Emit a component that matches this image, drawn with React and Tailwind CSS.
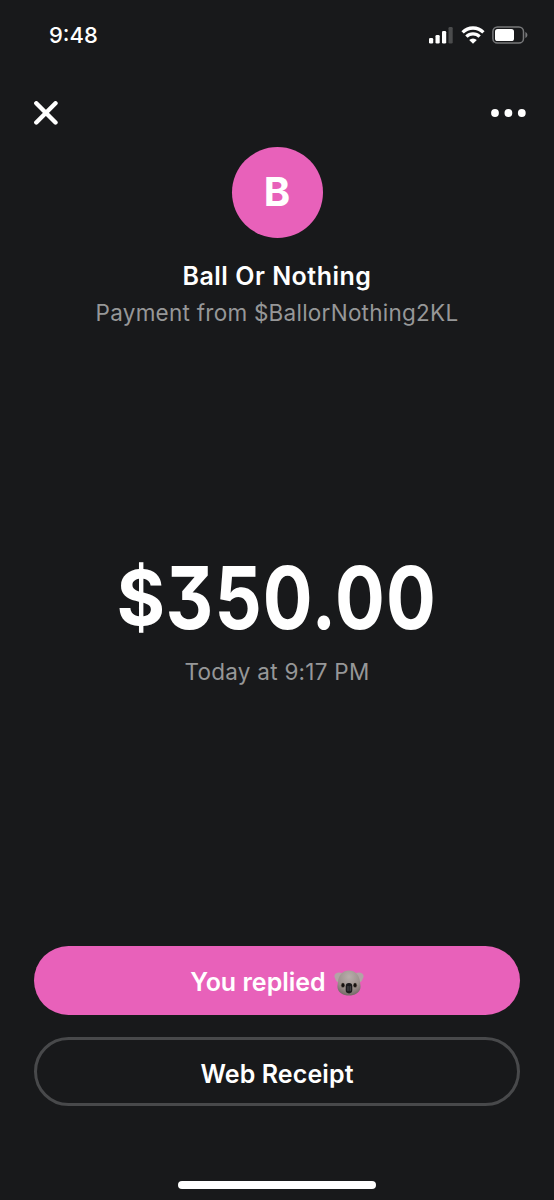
const SignalIcon = () => (
  <svg width="24" height="18" viewBox="0 0 24 18">
    <rect x="0" y="12" width="4.200" height="5.500" rx="1.300" fill="#fff" />
    <rect x="6.500" y="9" width="4.200" height="8.500" rx="1.300" fill="#fff" />
    <rect x="13" y="5" width="4.200" height="12.500" rx="1.300" fill="#fff" />
    <rect x="19.500" y="1" width="4.200" height="16.500" rx="1.300" fill="#4b4c4d" />
  </svg>
)

const WifiIcon = () => (
  <svg width="24" height="18" viewBox="0 0 24 18" fill="none" stroke="#fff" strokeWidth="3.3">
    <path d="M1.600 6.300a14.700 14.700 0 0 1 20.800 0" />
    <path d="M5.400 10.700a9.300 9.300 0 0 1 13.200 0" />
    <path d="M12 17.800l-3.800-3.800a5.400 5.400 0 0 1 7.600 0z" fill="#fff" stroke="none" />
  </svg>
)

const BatteryIcon = () => (
  <svg width="36" height="18" viewBox="0 0 36 18">
    <rect x="0.9" y="0.9" width="30.6" height="16.2" rx="4.6" fill="none" stroke="#77787a" strokeWidth="1.5" />
    <rect x="3" y="3" width="19" height="12" rx="2.6" fill="#fff" />
    <path d="M33.4 6v6c1.2-.5 2-1.6 2-3s-.8-2.5-2-3z" fill="#77787a" />
  </svg>
)

const CloseIcon = () => (
  <svg width="24" height="24" viewBox="0 0 24 24" fill="none" stroke="#fff" strokeWidth="4.4" strokeLinecap="round">
    <path d="M2.300 2.300l19.200 19.200M21.500 2.300L2.300 21.500" />
  </svg>
)

const MoreIcon = () => (
  <svg width="36" height="8" viewBox="0 0 36 8" fill="#fff">
    <circle cx="5" cy="4" r="3.900" />
    <circle cx="18.400" cy="4" r="3.900" />
    <circle cx="31.800" cy="4" r="3.900" />
  </svg>
)

const KoalaIcon = () => (
  <svg width="30" height="26" viewBox="0 0 30 26">
    <defs>
      <radialGradient id="koala-face" cx="0.5" cy="0.25" r="0.75">
        <stop offset="0" stopColor="#b8aeab" />
        <stop offset="0.65" stopColor="#9c918d" />
        <stop offset="1" stopColor="#756a67" />
      </radialGradient>
    </defs>
    <path d="M8 3C4 1.600.6 3.200.4 6c-.1 1.500.6 1.800.9 2.800.4 2.400 2.500 4 5.200 3.700z" fill="#b3a4a6" />
    <path d="M22 3c4-1.400 7.400.2 7.600 3 .1 1.500-.6 1.800-.9 2.800-.4 2.400-2.500 4-5.200 3.700z" fill="#b3a4a6" />
    <path d="M15 .6c6.200 0 10.500 4.600 11 11.400.2 2.400.9 3.600.4 6.200-.8 4.400-5.600 7.300-11.400 7.300S4.400 22.600 3.600 18.200c-.5-2.600.2-3.800.4-6.200C4.500 5.200 8.800.6 15 .6z" fill="url(#koala-face)" />
    <ellipse cx="8.900" cy="15.200" rx="2" ry="2.500" fill="#5c5148" />
    <ellipse cx="21.100" cy="15.200" rx="2" ry="2.500" fill="#5c5148" />
    <ellipse cx="9" cy="15.200" rx="1.300" ry="1.900" fill="#15110f" />
    <ellipse cx="21" cy="15.200" rx="1.300" ry="1.900" fill="#15110f" />
    <rect x="11.700" y="13" width="6.600" height="10.400" rx="3.300" fill="#1c1b1d" />
    <path d="M14 16.500v4M16.200 16.500v4" stroke="#66666b" strokeWidth="0.700" strokeLinecap="round" />
  </svg>
)

const StatusBar = () => (
  <div className="flex h-[70px] items-center justify-between pl-[49px] pr-[26px]">
    <span className="text-[22px] font-medium leading-none">9:48</span>
    <div className="flex items-center gap-[7.5px]">
      <SignalIcon />
      <WifiIcon />
      <BatteryIcon />
    </div>
  </div>
)

const App = () => {
  return (
    <div className="flex h-[1200px] w-[554px] flex-col bg-[#18191b] font-['Inter',sans-serif] text-white">
      <StatusBar />

      <div className="flex h-[76.500px] items-center justify-between pl-[33.500px] pr-[28px] pt-[9px]">
        <button type="button" aria-label="Close">
          <CloseIcon />
        </button>
        <button type="button" aria-label="More">
          <MoreIcon />
        </button>
      </div>

      <div className="flex flex-col items-center">
        <div className="flex h-[91px] w-[91px] items-center justify-center rounded-full bg-[#e861ba] text-[40px] font-bold leading-none">
          B
        </div>
        <h1 className="mt-[22px] whitespace-nowrap text-[25px] font-semibold leading-8 tracking-[0.5px]">
          Ball Or Nothing
        </h1>
        <p className="mt-[5px] whitespace-nowrap text-[22.5px] leading-8 tracking-[0.25px] text-[#969798]">
          Payment from $BallorNothing2KL
        </p>
      </div>

      <div className="mt-[219px] flex flex-col items-center">
        <div className="flex origin-center scale-x-[0.85] items-baseline gap-[3px] whitespace-nowrap pl-[3px] text-[87px] font-bold leading-[100px] tracking-[1.200px] [font-feature-settings:'cv09']">
          <span className="relative -top-[4px] inline-block scale-x-[1.150] text-[76px] font-bold">$</span>
          <span>350.00</span>
        </div>
        <p className="mt-[5px] whitespace-nowrap text-[22.5px] leading-8 tracking-[0.25px] text-[#969798]">
          Today at 9:17 PM
        </p>
      </div>

      <div className="mt-auto flex flex-col gap-[22.500px] px-[34px]">
        <button type="button" className="flex h-[69px] items-center justify-center gap-[8px] rounded-full bg-[#e861ba] pt-[5px] text-[25px] font-semibold">
          <span>You replied</span>
          <KoalaIcon />
        </button>
        <button type="button" className="flex h-[69px] items-center justify-center rounded-full border-[3px] border-[#48494b] pt-[6px] text-[25px] font-semibold tracking-[0.1px]">
          Web Receipt
        </button>
      </div>

      <div className="mx-auto mb-[11px] mt-[75px] h-[8px] w-[198px] rounded-full bg-white" />
    </div>
  )
}

export default App
